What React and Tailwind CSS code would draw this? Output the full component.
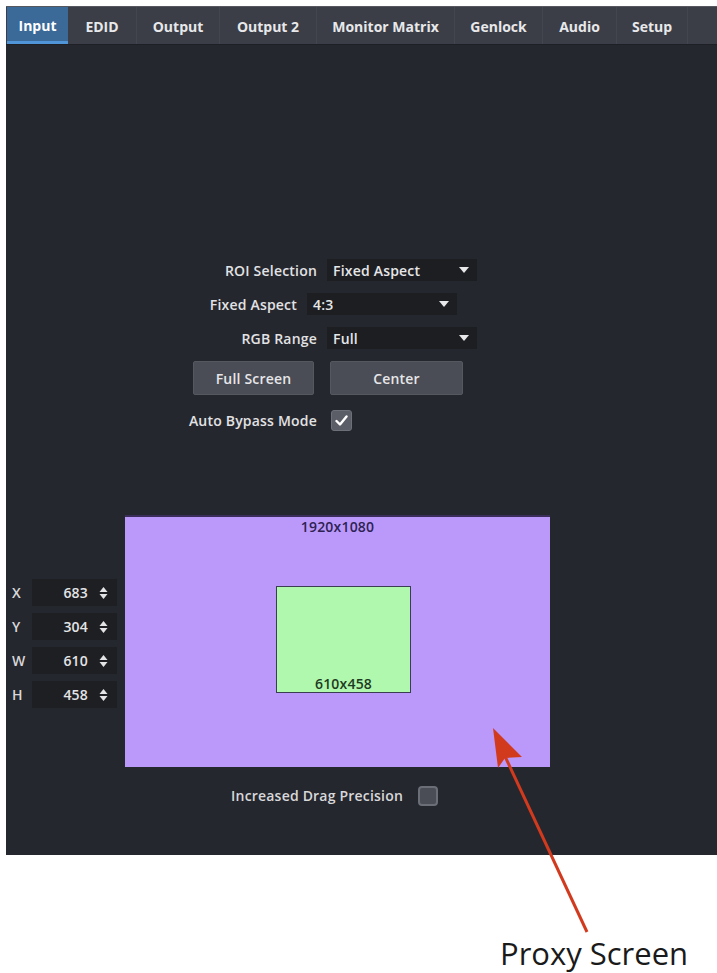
import React from "react";

const tabs = [
  ["Input", 61, true],
  ["EDID", 69],
  ["Output", 83],
  ["Output 2", 97],
  ["Monitor Matrix", 138],
  ["Genlock", 88],
  ["Audio", 74],
  ["Setup", 71],
];

function Caret() {
  return (
    <svg width="10" height="6" viewBox="0 0 10 6" className="shrink-0">
      <path d="M0 0 L10 0 L5 6 Z" fill="#e8e8ea" />
    </svg>
  );
}

function Select({ value }) {
  return (
    <div className="w-[150px] h-[22px] bg-[#1c1e22] flex items-center justify-between pl-[6px] pr-[8px] text-[#e6e6e8]">
      <span>{value}</span>
      <Caret />
    </div>
  );
}

function Spinner() {
  return (
    <svg width="9" height="14" viewBox="0 0 9 14">
      <path d="M0.5 6 L4.5 1 L8.5 6 Z" fill="#e4e4e6" />
      <path d="M0.5 8 L4.5 13 L8.5 8 Z" fill="#e4e4e6" />
    </svg>
  );
}

function Field({ label, value }) {
  return (
    <div className="flex items-center h-[27px]">
      <div className="w-[26px] pl-[6px] text-[#d8d8da]">{label}</div>
      <div className="w-[85px] h-[27px] bg-[#1d1f23] flex items-center justify-end pr-[9px] gap-[11px] text-[#e4e4e6]">
        <span>{value}</span>
        <Spinner />
      </div>
    </div>
  );
}

export default function App() {
  return (
    <div
      className="relative w-[717px] h-[973px] bg-white overflow-hidden"
      style={{ fontFamily: "'Open Sans', 'Liberation Sans', sans-serif" }}
    >
      <div className="pt-[6px] pl-[6px]">
        <div className="w-[711px] h-[849px] bg-[#25272e] flex flex-col border-t border-[#55585f] text-[14px] font-semibold tracking-[0.2px]">
          {/* tab bar */}
          <div className="h-[38px] bg-[#3b3e47] flex items-stretch pl-[1px] border-b border-[#1e2025] font-bold tracking-[0px]">
            {tabs.map(([t, w, active]) => (
              <div
                key={t}
                style={{ width: w }}
                className={
                  active
                    ? "flex items-center justify-center bg-[#3c6a98] border-b-[3px] border-[#4f95d8] text-white pt-[2px]"
                    : "flex items-center justify-center text-[#e8e8ea] border-r border-[#43464f] pt-[1px]"
                }
              >
                {t}
              </div>
            ))}
          </div>

          {/* form */}
          <div className="flex flex-col mt-[214px] text-[#e2e2e4]">
            <div className="flex items-center h-[22px]">
              <div className="w-[321px] text-right pr-[10px]">ROI Selection</div>
              <Select value="Fixed Aspect" />
            </div>
            <div className="flex items-center h-[22px] mt-[12px]">
              <div className="w-[301px] text-right pr-[10px]">Fixed Aspect</div>
              <Select value="4:3" />
            </div>
            <div className="flex items-center h-[22px] mt-[12px]">
              <div className="w-[321px] text-right pr-[10px]">RGB Range</div>
              <Select value="Full" />
            </div>
            <div className="flex items-center mt-[12px] pl-[187px] gap-[16px]">
              <div className="w-[121px] h-[34px] rounded-[2px] bg-[#4a4d55] border border-[#55585f] flex items-center justify-center text-[#e6e6e8]">
                Full Screen
              </div>
              <div className="w-[133px] h-[34px] rounded-[2px] bg-[#4a4d55] border border-[#55585f] flex items-center justify-center text-[#e6e6e8]">
                Center
              </div>
            </div>
            <div className="flex items-center mt-[15px] h-[21px]">
              <div className="w-[325px] text-right pr-[14px]">Auto Bypass Mode</div>
              <div className="w-[21px] h-[21px] rounded-[3px] bg-[#5b5e67] border border-[#6d7079] flex items-center justify-center">
                <svg width="13" height="11" viewBox="0 0 13 11">
                  <path d="M1.5 6 L5 9.5 L11.5 1.5" fill="none" stroke="white" strokeWidth="2.4" strokeLinecap="round" strokeLinejoin="round" />
                </svg>
              </div>
            </div>
          </div>

          {/* proxy area */}
          <div className="flex mt-[84px]">
            <div className="w-[119px] pt-[64px] flex flex-col gap-[7px]">
              <Field label="X" value="683" />
              <Field label="Y" value="304" />
              <Field label="W" value="610" />
              <Field label="H" value="458" />
            </div>
            <div className="w-[425px] h-[252px] bg-[#bb99fb] border-t-2 border-[#3a2d5a] flex flex-col items-center">
              <div className="mt-[1px] text-[#2e2253] leading-[18px]">1920x1080</div>
              <div className="mt-[50px] ml-[12px] w-[135px] h-[107px] bg-[#b0f8ad] border border-[#3b3d52] flex flex-col items-center justify-end">
                <div className="text-[#1f3a22] leading-[17px]">610x458</div>
              </div>
            </div>
          </div>

          <div className="flex items-center mt-[18px] h-[21px]">
            <div className="w-[412px] text-right pr-[15px] text-[#d8d8da]">Increased Drag Precision</div>
            <div className="w-[20px] h-[20px] rounded-[4px] bg-[#4a4d56] border-2 border-[#6b6e77]" />
          </div>
        </div>
      </div>

      <div
        className="pl-[500px] mt-[80px] text-[31px] leading-[36px] text-[#1a1a1a]"
        style={{ fontFamily: "'Open Sans', 'Liberation Sans', sans-serif" }}
      >
        Proxy Screen
      </div>

      {/* annotation arrow */}
      <svg className="absolute left-0 top-0 pointer-events-none" width="717" height="973">
        <line x1="587" y1="932" x2="503" y2="752" stroke="#d23a1e" strokeWidth="3" />
        <path d="M493 728 L522 757 L505 758 L498 768 Z" fill="#d23a1e" />
      </svg>
    </div>
  );
}
